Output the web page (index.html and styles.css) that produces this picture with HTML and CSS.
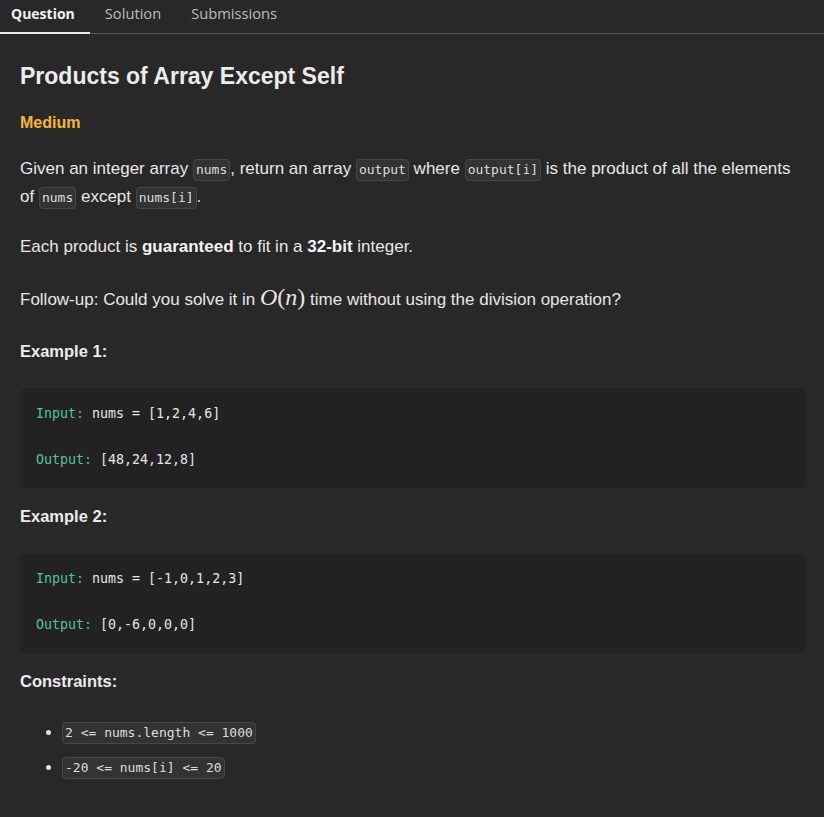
FILE: index.html
```html
<!DOCTYPE html>
<html>
<head>
<meta charset="utf-8">
<link rel="stylesheet" href="styles.css">
</head>
<body>
<nav class="tabs">
  <div class="tab active">Question</div>
  <div class="tab">Solution</div>
  <div class="tab">Submissions</div>
</nav>
<main class="content">
  <h1 class="title">Products of Array Except Self</h1>
  <div class="difficulty">Medium</div>
  <p class="para">Given an integer array <code class="ic">nums</code>, return an array <code class="ic">output</code> where <code class="ic">output[i]</code> is the product of all the elements of <code class="ic">nums</code> except <code class="ic">nums[i]</code>.</p>
  <p class="para">Each product is <b>guaranteed</b> to fit in a <b>32-bit</b> integer.</p>
  <p class="para follow">Follow-up: Could you solve it in <span class="math"><i>O</i>(<i>n</i>)</span> time without using the division operation?</p>
  <h3 class="sub">Example 1:</h3>
  <div class="codeblock">
    <div class="cl"><span class="kw">Input:</span> nums = [1,2,4,6]</div>
    <div class="cl"><span class="kw">Output:</span> [48,24,12,8]</div>
  </div>
  <h3 class="sub">Example 2:</h3>
  <div class="codeblock">
    <div class="cl"><span class="kw">Input:</span> nums = [-1,0,1,2,3]</div>
    <div class="cl"><span class="kw">Output:</span> [0,-6,0,0,0]</div>
  </div>
  <h3 class="sub">Constraints:</h3>
  <ul class="list">
    <li><code class="ic">2 &lt;= nums.length &lt;= 1000</code></li>
    <li><code class="ic">-20 &lt;= nums[i] &lt;= 20</code></li>
  </ul>
</main>
</body>
</html>
```
FILE: styles.css
```css
* { box-sizing: border-box; }
html, body { margin: 0; padding: 0; background: #282828; }
body {
  width: 824px;
  height: 817px;
  overflow: hidden;
  color: #e6e6e6;
  font-family: "Liberation Sans", Arial, sans-serif;
}
.tabs {
  display: flex;
  height: 34px;
  border-bottom: 1px solid #5a5a5a;
  background: #282828;
}
.tab {
  font-family: "Open Sans", "Noto Sans", sans-serif;
  font-size: 14.7px;
  color: #bdbdbd;
  padding: 0 15px;
  line-height: 27px;
  height: 34px;
}
.tab.active {
  font-size: 14px;
  padding-left: 11px;
  padding-right: 15px;
  color: #f2f2f2;
  font-weight: 700;
  border-bottom: 2px solid #e8e8e8;
  margin-bottom: -1px;
}
.content { padding: 0 19px 0 20px; }
.title {
  font-size: 23px;
  font-weight: 700;
  margin: 28px 0 0;
  line-height: 28px;
  color: #ececec;
}
.difficulty {
  color: #f7b924;
  font-weight: 700;
  font-size: 16px;
  margin-top: 23px;
  line-height: 20px;
}
.para {
  font-size: 17px;
  line-height: 27px;
  margin: 22px 0 0;
  color: #e6e6e6;
}
.para.follow { margin-top: 26px; }
.para b { color: #f4f4f4; }
.ic {
  font-family: "DejaVu Sans Mono", "Liberation Mono", monospace;
  font-size: 13px;
  background: #333333;
  border: 1px solid #474747;
  border-radius: 4px;
  padding: 2px 2px 3px;
  color: #dedede;
}
.math { font-family: "Liberation Serif", "DejaVu Serif", serif; font-size: 24px; line-height: 20px; }
.math i { font-style: italic; }
.sub {
  font-size: 16.5px;
  font-weight: 700;
  margin: 0;
  margin-top: 27px;
  line-height: 22px;
  color: #ececec;
}
.codeblock {
  background: #222222;
  border-radius: 6px;
  margin-top: 26px;
  padding: 15px 16px 17px;
  width: 785px;
  font-family: "DejaVu Sans Mono", "Liberation Mono", monospace;
  font-size: 13.3px;
  color: #e6e6e6;
}
.cl { line-height: 22px; }
.cl + .cl { margin-top: 24px; }
.kw { color: #4fc3a0; }
.codeblock + .sub { margin-top: 17px; }
.list { margin: 29px 0 0; padding-left: 42px; }
.list li { font-size: 16px; line-height: 22px; margin-bottom: 12px; }
.list li::marker { color: #e0e0e0; }
```
